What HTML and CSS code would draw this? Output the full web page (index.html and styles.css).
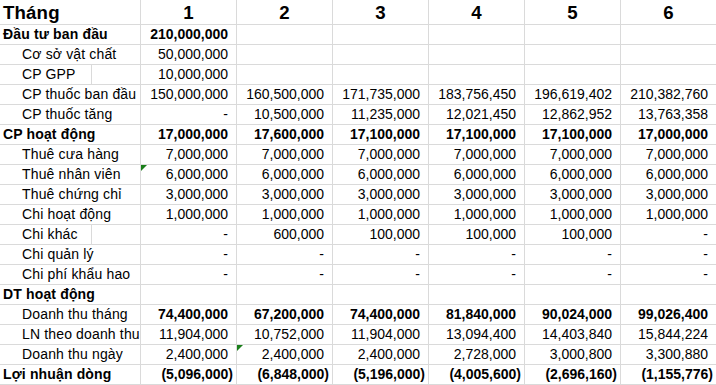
FILE: index.html
```html
<!DOCTYPE html>
<html lang="vi">
<head>
<meta charset="utf-8">
<title>Bảng dự toán</title>
<link rel="stylesheet" href="styles.css">
</head>
<body>
<div class="sheet">
  <div class="row head">
    <div class="c lbl">Tháng</div>
    <div class="c mid">1</div><div class="c mid">2</div><div class="c mid">3</div><div class="c mid">4</div><div class="c mid">5</div><div class="c mid">6</div>
  </div>
  <div class="row b">
    <div class="c lbl">Đầu tư ban đầu</div>
    <div class="c">210,000,000</div><div class="c"></div><div class="c"></div><div class="c"></div><div class="c"></div><div class="c"></div>
  </div>
  <div class="row">
    <div class="c lbl ind">Cơ sở vật chất</div>
    <div class="c">50,000,000</div><div class="c"></div><div class="c"></div><div class="c"></div><div class="c"></div><div class="c"></div>
  </div>
  <div class="row">
    <div class="c lbl ind split">CP GPP</div>
    <div class="c">10,000,000</div><div class="c"></div><div class="c"></div><div class="c"></div><div class="c"></div><div class="c"></div>
  </div>
  <div class="row">
    <div class="c lbl ind">CP thuốc ban đầu</div>
    <div class="c">150,000,000</div><div class="c">160,500,000</div><div class="c">171,735,000</div><div class="c">183,756,450</div><div class="c">196,619,402</div><div class="c">210,382,760</div>
  </div>
  <div class="row">
    <div class="c lbl ind">CP thuốc tăng</div>
    <div class="c">-</div><div class="c">10,500,000</div><div class="c">11,235,000</div><div class="c">12,021,450</div><div class="c">12,862,952</div><div class="c">13,763,358</div>
  </div>
  <div class="row b">
    <div class="c lbl">CP hoạt động</div>
    <div class="c">17,000,000</div><div class="c">17,600,000</div><div class="c">17,100,000</div><div class="c">17,100,000</div><div class="c">17,100,000</div><div class="c">17,000,000</div>
  </div>
  <div class="row">
    <div class="c lbl ind">Thuê cưa hàng</div>
    <div class="c">7,000,000</div><div class="c">7,000,000</div><div class="c">7,000,000</div><div class="c">7,000,000</div><div class="c">7,000,000</div><div class="c">7,000,000</div>
  </div>
  <div class="row">
    <div class="c lbl ind">Thuê nhân viên</div>
    <div class="c flag">6,000,000</div><div class="c">6,000,000</div><div class="c">6,000,000</div><div class="c">6,000,000</div><div class="c">6,000,000</div><div class="c">6,000,000</div>
  </div>
  <div class="row">
    <div class="c lbl ind">Thuê chứng chỉ</div>
    <div class="c">3,000,000</div><div class="c">3,000,000</div><div class="c">3,000,000</div><div class="c">3,000,000</div><div class="c">3,000,000</div><div class="c">3,000,000</div>
  </div>
  <div class="row">
    <div class="c lbl ind">Chi hoạt động</div>
    <div class="c">1,000,000</div><div class="c">1,000,000</div><div class="c">1,000,000</div><div class="c">1,000,000</div><div class="c">1,000,000</div><div class="c">1,000,000</div>
  </div>
  <div class="row">
    <div class="c lbl ind split">Chi khác</div>
    <div class="c">-</div><div class="c">600,000</div><div class="c">100,000</div><div class="c">100,000</div><div class="c">100,000</div><div class="c">-</div>
  </div>
  <div class="row">
    <div class="c lbl ind">Chi quản lý</div>
    <div class="c">-</div><div class="c">-</div><div class="c">-</div><div class="c">-</div><div class="c">-</div><div class="c">-</div>
  </div>
  <div class="row">
    <div class="c lbl ind">Chi phí khẩu hao</div>
    <div class="c">-</div><div class="c">-</div><div class="c">-</div><div class="c">-</div><div class="c">-</div><div class="c">-</div>
  </div>
  <div class="row b">
    <div class="c lbl">DT hoạt động</div>
    <div class="c"></div><div class="c"></div><div class="c"></div><div class="c"></div><div class="c"></div><div class="c"></div>
  </div>
  <div class="row">
    <div class="c lbl ind">Doanh thu tháng</div>
    <div class="c b">74,400,000</div><div class="c b">67,200,000</div><div class="c b">74,400,000</div><div class="c b">81,840,000</div><div class="c b">90,024,000</div><div class="c b">99,026,400</div>
  </div>
  <div class="row">
    <div class="c lbl ind">LN theo doanh thu</div>
    <div class="c">11,904,000</div><div class="c">10,752,000</div><div class="c">11,904,000</div><div class="c">13,094,400</div><div class="c">14,403,840</div><div class="c">15,844,224</div>
  </div>
  <div class="row">
    <div class="c lbl ind">Doanh thu ngày</div>
    <div class="c">2,400,000</div><div class="c flag">2,400,000</div><div class="c">2,400,000</div><div class="c">2,728,000</div><div class="c">3,000,800</div><div class="c">3,300,880</div>
  </div>
  <div class="row b">
    <div class="c lbl">Lợi nhuận dòng</div>
    <div class="c neg">(5,096,000)</div><div class="c neg">(6,848,000)</div><div class="c neg">(5,196,000)</div><div class="c neg">(4,005,600)</div><div class="c neg">(2,696,160)</div><div class="c neg">(1,155,776)</div>
  </div>
</div>
</body>
</html>
```
FILE: styles.css
```css
html, body {
  margin: 0;
  padding: 0;
  background: #ffffff;
}

body {
  font-family: "Liberation Sans", Arial, sans-serif;
  font-size: 14px;
  color: #000000;
}

.sheet {
  width: 716px;
  overflow: hidden;
}

.row {
  display: grid;
  grid-template-columns: 141px repeat(6, 96px);
  height: 20px;
}

.row.head {
  height: 25px;
}

.c {
  box-sizing: border-box;
  border-right: 1px solid #dadada;
  border-bottom: 1px solid #dadada;
  text-align: right;
  padding-right: 8px;
  white-space: nowrap;
  overflow: hidden;
  line-height: 19px;
}

.head .c {
  font-size: 18.67px;
  font-weight: bold;
  line-height: 25px;
}

.c.mid {
  text-align: center;
  padding-right: 0;
}

.c.lbl {
  text-align: left;
  padding-left: 3px;
  padding-right: 0;
  letter-spacing: 0.15px;
}

.c.lbl.ind {
  padding-left: 22px;
}

.c.split {
  background: linear-gradient(to right, transparent 91px, #dadada 91px, #dadada 92px, transparent 92px);
}

.b,
.b .c {
  font-weight: bold;
}

.c.neg {
  padding-right: 3px;
}

.c.flag {
  position: relative;
}

.c.flag::before {
  content: "";
  position: absolute;
  top: 0;
  left: 0;
  border-top: 6px solid #1a7f1a;
  border-right: 6px solid transparent;
}
```
